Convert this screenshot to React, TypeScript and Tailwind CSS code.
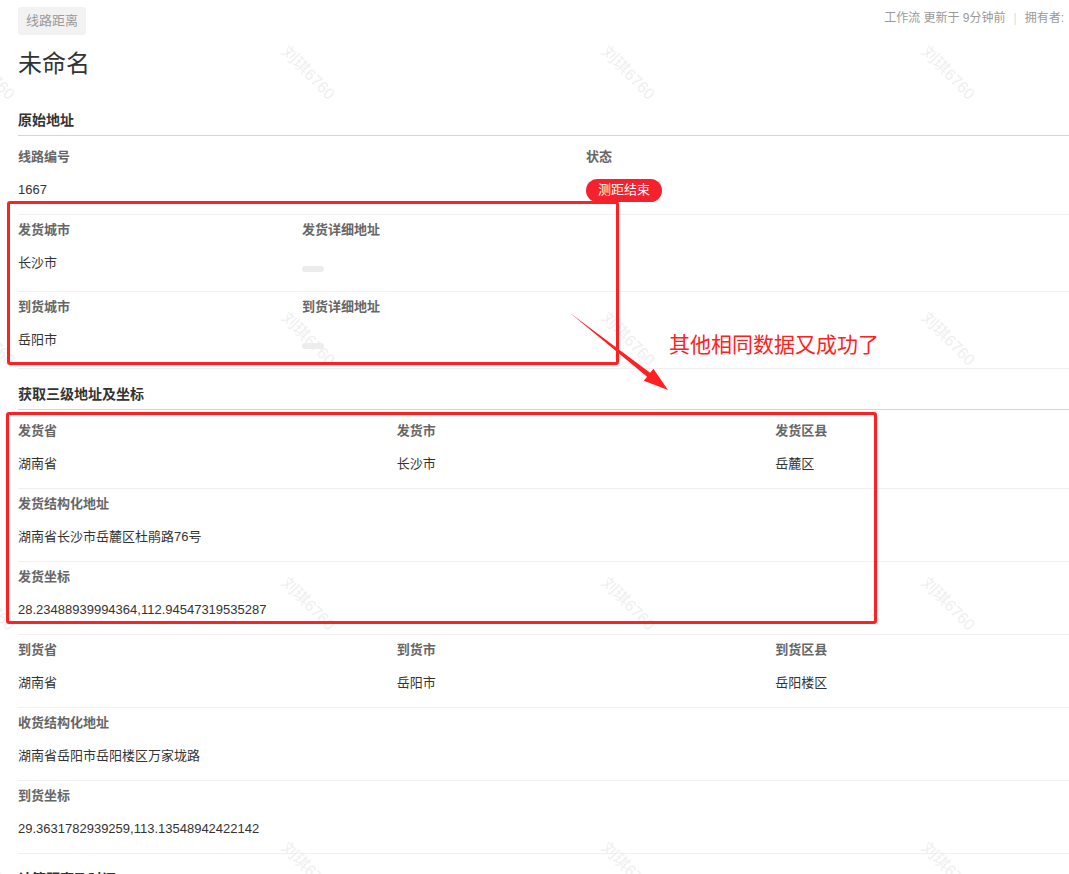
import React from 'react'

const FONT = '"Liberation Sans", "Noto Sans CJK SC", sans-serif'

type Cell = { label: string; value?: React.ReactNode; span?: string }

function Pill() {
  return <div className="mt-[11px] h-[6px] w-[22px] rounded-full bg-[#ececec]" />
}

function Badge() {
  return (
    <span className="flex h-[23px] items-center rounded-full bg-[#f5222d] px-3 text-[13px] text-white">
      测距结束
    </span>
  )
}

function Row({ cells, cols, tall }: { cells: Cell[]; cols: string; tall?: boolean }) {
  return (
    <div className={`grid ${cols} border-b border-[#f0f0f0] pt-[5px] ${tall ? 'pb-[18px]' : 'pb-[14px]'}`}>
      {cells.map((c, i) => (
        <div key={i} className={c.span ?? ''}>
          <div className="h-5 text-[13px] font-semibold leading-5 text-[#666]">{c.label}</div>
          <div className="mt-[13px] flex h-5 items-center text-[13px] leading-5 text-[#333]">
            {c.value}
          </div>
        </div>
      ))}
    </div>
  )
}

function SectionHeader({ title, first }: { title: string; first?: boolean }) {
  return (
    <div
      className={`mb-[6px] border-b border-[#d4d4d4] pb-[5px] text-[14px] font-bold leading-5 text-[#333] ${
        first ? 'mt-[30px]' : 'mt-[15px]'
      }`}
    >
      {title}
    </div>
  )
}

const WATERMARK_X = [-12, 308, 628, 948]
const WATERMARK_Y = [73, 339, 604, 869]

export default function App() {
  return (
    <div className="relative h-[874px] w-full overflow-hidden bg-white" style={{ fontFamily: FONT }}>
      {/* top bar */}
      <div className="flex items-start justify-between pl-[18px] pr-[5px] pt-[7px]">
        <span className="flex h-7 items-center rounded-[3px] bg-[#f2f2f2] px-2 text-[13px] text-[#999]">
          线路距离
        </span>
        <div className="mt-[3px] flex items-center gap-2 text-[12px] leading-4 text-[#999]">
          <span>工作流 更新于 9分钟前</span>
          <span className="text-[#ddd]">|</span>
          <span>拥有者:</span>
        </div>
      </div>

      <div className="ml-[18px] w-[1136px]">
        <h1 className="mt-[13px] text-[24px] leading-8 text-[#333]">未命名</h1>

        <SectionHeader title="原始地址" first />
        <Row
          cols="grid-cols-2"
          cells={[
            { label: '线路编号', value: '1667' },
            { label: '状态', value: <Badge /> },
          ]}
        />
        <Row
          cols="grid-cols-4"
          tall
          cells={[
            { label: '发货城市', value: '长沙市' },
            { label: '发货详细地址', value: <Pill />, span: 'col-span-3' },
          ]}
        />
        <Row
          cols="grid-cols-4"
          tall
          cells={[
            { label: '到货城市', value: '岳阳市' },
            { label: '到货详细地址', value: <Pill />, span: 'col-span-3' },
          ]}
        />

        <SectionHeader title="获取三级地址及坐标" />
        <Row
          cols="grid-cols-3"
          cells={[
            { label: '发货省', value: '湖南省' },
            { label: '发货市', value: '长沙市' },
            { label: '发货区县', value: '岳麓区' },
          ]}
        />
        <Row cols="grid-cols-1" cells={[{ label: '发货结构化地址', value: '湖南省长沙市岳麓区杜鹃路76号' }]} />
        <Row cols="grid-cols-1" cells={[{ label: '发货坐标', value: '28.23488939994364,112.94547319535287' }]} />
        <Row
          cols="grid-cols-3"
          cells={[
            { label: '到货省', value: '湖南省' },
            { label: '到货市', value: '岳阳市' },
            { label: '到货区县', value: '岳阳楼区' },
          ]}
        />
        <Row cols="grid-cols-1" cells={[{ label: '收货结构化地址', value: '湖南省岳阳市岳阳楼区万家垅路' }]} />
        <Row cols="grid-cols-1" cells={[{ label: '到货坐标', value: '29.3631782939259,113.13548942422142' }]} />

        <SectionHeader title="计算距离及时间" />
      </div>

      {/* watermarks */}
      <div className="pointer-events-none absolute inset-0">
        {WATERMARK_Y.map((y) =>
          WATERMARK_X.map((x) => (
            <span
              key={`${x}-${y}`}
              className="absolute -translate-x-1/2 -translate-y-1/2 rotate-45 whitespace-nowrap text-[16px] text-[#efefef]"
              style={{ left: x, top: y }}
            >
              刘琪6760
            </span>
          ))
        )}
      </div>

      {/* annotations */}
      <div className="pointer-events-none absolute left-[7px] top-[201px] h-[164px] w-[612px] rounded-[3px] border-[3px] border-[#ff2121]" />
      <div className="pointer-events-none absolute left-[6px] top-[412px] h-[212px] w-[871px] rounded-[3px] border-[3px] border-[#ff2121]" />
      <svg className="pointer-events-none absolute left-0 top-0" width="1069" height="874">
        <polygon
          points="570,313 650.1,372.8 653.4,368.8 668,390 643.8,380.8 647.1,376.8"
          fill="#ff2121"
        />
      </svg>
      <div className="pointer-events-none absolute left-[669px] top-[331px] text-[21px] leading-7 text-[#ff2121]">
        其他相同数据又成功了
      </div>
    </div>
  )
}
